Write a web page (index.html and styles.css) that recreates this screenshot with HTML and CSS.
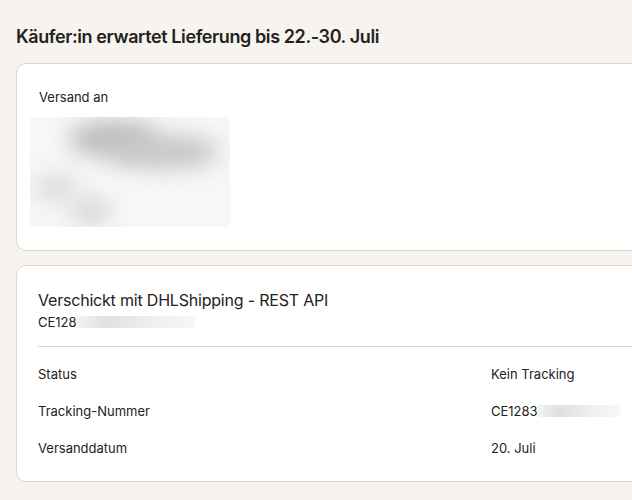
FILE: index.html
```html
<!DOCTYPE html>
<html lang="de">
<head>
    <meta charset="UTF-8">
    <meta name="viewport" content="width=device-width, initial-scale=1.0">
    <title>Versand</title>
    <link rel="stylesheet" href="styles.css">
</head>
<body>
    <main class="page">
        <h1 class="delivery-title">Käufer:in erwartet Lieferung bis 22.-30. Juli</h1>

        <section class="card">
            <p class="label">Versand an</p>
            <!-- address is hidden behind a blur -->
            <div class="address-blur">
                <span class="blob blob-name"></span>
                <span class="blob blob-name2"></span>
                <span class="blob blob-line"></span>
                <span class="blob blob-zip"></span>
            </div>
        </section>

        <section class="card shipment">
            <div class="shipment-head">
                <h2 class="carrier">Verschickt mit DHLShipping - REST API</h2>
                <p class="code">CE128<span class="hidden-code"></span></p>
            </div>
            <dl class="details">
                <div class="row">
                    <dt>Status</dt>
                    <dd>Kein Tracking</dd>
                </div>
                <div class="row">
                    <dt>Tracking-Nummer</dt>
                    <dd>CE1283<span class="hidden-code short"></span></dd>
                </div>
                <div class="row">
                    <dt>Versanddatum</dt>
                    <dd>20. Juli</dd>
                </div>
            </dl>
        </section>
    </main>
</body>
</html>
```

FILE: styles.css
```css
body {
    margin: 0;
    background-color: #f7f4ef;
    font-family: Inter, "Noto Sans", sans-serif;
    color: #222222;
    overflow: hidden;
}

.page {
    width: 720px;
    padding: 26px 0 0 16px;
}

.delivery-title {
    margin: 0 0 15px;
    font-size: 18px;
    font-weight: 600;
    letter-spacing: -0.4px;
    line-height: 22px;
}

.card {
    background: #ffffff;
    border: 1px solid #ddd5cc;
    border-radius: 10px;
    margin-bottom: 14px;
}

.card:first-of-type {
    padding: 23px 0 23px 13px;
}

.label {
    margin: 0 0 10px 9px;
    font-size: 13px;
    line-height: 20px;
}

.address-blur {
    position: relative;
    width: 200px;
    height: 110px;
    background: #f7f7f7;
    overflow: hidden;
}

.blob {
    position: absolute;
    border-radius: 50%;
    filter: blur(11px);
}

.blob-name {
    left: 38px;
    top: 4px;
    width: 90px;
    height: 36px;
    background: #bcbcbc;
}

.blob-name2 {
    left: 80px;
    top: 18px;
    width: 110px;
    height: 34px;
    background: #c6c6c6;
}

.blob-line {
    left: 4px;
    top: 58px;
    width: 44px;
    height: 26px;
    background: #dadada;
}

.blob-zip {
    left: 42px;
    top: 82px;
    width: 38px;
    height: 24px;
    background: #d0d0d0;
}

.shipment {
    padding: 23px 0 15px 21px;
}

.shipment-head {
    padding-bottom: 14px;
    border-bottom: 1px solid #d9d6d1;
}

.carrier {
    margin: 0;
    font-size: 16px;
    font-weight: 400;
    letter-spacing: -0.2px;
    line-height: 22px;
}

.code {
    margin: 1px 0 0;
    font-size: 13px;
    line-height: 20px;
}

.hidden-code {
    display: inline-block;
    width: 118px;
    height: 12px;
    vertical-align: -1px;
    background: linear-gradient(90deg, #f3f3f3 0%, #e0e0e0 25%, #efefef 65%, #f7f7f7 100%);
}

.hidden-code.short {
    width: 82px;
}

.details {
    margin: 8px 0 0;
}

.row {
    display: flex;
    height: 37px;
    align-items: center;
    font-size: 13px;
}

.row dt {
    width: 453px;
}

.row dd {
    margin: 0;
}
```
